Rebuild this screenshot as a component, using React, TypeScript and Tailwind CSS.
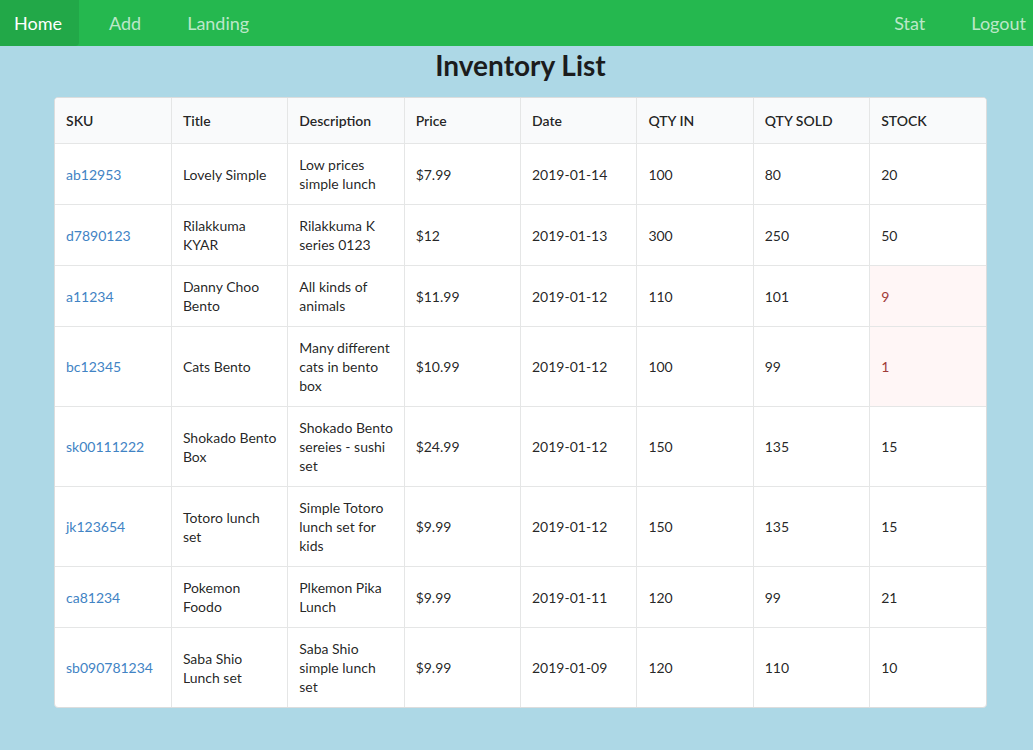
import React from "react";

interface Item {
	sku: string;
	title: string;
	description: string;
	price: string;
	date: string;
	qtyIn: number;
	qtySold: number;
}

const items: Item[] = [
	{ sku: "ab12953", title: "Lovely Simple", description: "Low prices simple lunch", price: "$7.99", date: "2019-01-14", qtyIn: 100, qtySold: 80 },
	{ sku: "d7890123", title: "Rilakkuma KYAR", description: "Rilakkuma K series 0123", price: "$12", date: "2019-01-13", qtyIn: 300, qtySold: 250 },
	{ sku: "a11234", title: "Danny Choo Bento", description: "All kinds of animals", price: "$11.99", date: "2019-01-12", qtyIn: 110, qtySold: 101 },
	{ sku: "bc12345", title: "Cats Bento", description: "Many different cats in bento box", price: "$10.99", date: "2019-01-12", qtyIn: 100, qtySold: 99 },
	{ sku: "sk00111222", title: "Shokado Bento Box", description: "Shokado Bento sereies - sushi set", price: "$24.99", date: "2019-01-12", qtyIn: 150, qtySold: 135 },
	{ sku: "jk123654", title: "Totoro lunch set", description: "Simple Totoro lunch set for kids", price: "$9.99", date: "2019-01-12", qtyIn: 150, qtySold: 135 },
	{ sku: "ca81234", title: "Pokemon Foodo", description: "Plkemon Pika Lunch", price: "$9.99", date: "2019-01-11", qtyIn: 120, qtySold: 99 },
	{ sku: "sb090781234", title: "Saba Shio Lunch set", description: "Saba Shio simple lunch set", price: "$9.99", date: "2019-01-09", qtyIn: 120, qtySold: 110 },
];

const headers = ["SKU", "Title", "Description", "Price", "Date", "QTY IN", "QTY SOLD", "STOCK"];

const cell = "border-l border-[#e5e6e6] py-[11px] pl-[11px] pr-[8px]";

const App: React.FC = () => {
	return (
		<div className="min-h-[750px] bg-[#add8e6] font-['Lato','Liberation_Sans',sans-serif] text-[rgba(0,0,0,0.87)]">
			{/* Nav bar */}
			<nav className="flex h-[46px] items-stretch justify-between bg-[#25b84f] text-[18px] leading-none">
				<div className="flex items-stretch">
					<a className="flex items-center rounded-br-[4px] bg-[#22a848] pl-[14px] pr-[17px] text-white">Home</a>
					<a className="ml-[30px] flex items-center text-white/70">Add</a>
					<a className="ml-[46px] flex items-center text-white/70">Landing</a>
				</div>
				<div className="flex items-center gap-[46px] pr-[7px] text-white/70">
					<a>Stat</a>
					<a>Logout</a>
				</div>
			</nav>

			<div className="ml-[54px] mr-[46px]">
				<h2 className="mt-[3px] text-center text-[28px] font-bold leading-[33px] text-[#1b1c1d]">Inventory List</h2>

				{/* Table */}
				<div className="mt-[15px] overflow-hidden rounded-[4px] border border-[#dcdddd] bg-white">
					<table className="w-full table-fixed border-collapse text-[14px] leading-[19px]">
						<thead>
							<tr className="bg-[#f9fafb]">
								{headers.map((h, i) => (
									<th
										key={h}
										className={`px-[11px] py-[13px] text-left font-semibold leading-[19px] ${i > 0 ? "border-l border-[#e5e6e6]" : ""}`}
									>
										{h}
									</th>
								))}
							</tr>
						</thead>
						<tbody>
							{items.map((it) => {
								const stock = it.qtyIn - it.qtySold;
								const low = stock < 10;
								return (
									<tr key={it.sku} className="border-t border-[#e5e6e6]">
										<td className="py-[11px] pl-[11px] pr-[8px] text-[#4183c4]">{it.sku}</td>
										<td className={cell}>{it.title}</td>
										<td className={cell}>{it.description}</td>
										<td className={cell}>{it.price}</td>
										<td className={cell}>{it.date}</td>
										<td className={cell}>{it.qtyIn}</td>
										<td className={cell}>{it.qtySold}</td>
										<td className={low ? `${cell} bg-[#fff6f6] text-[#9f3a38]` : cell}>{stock}</td>
									</tr>
								);
							})}
						</tbody>
					</table>
				</div>
			</div>
		</div>
	);
};

export default App;
